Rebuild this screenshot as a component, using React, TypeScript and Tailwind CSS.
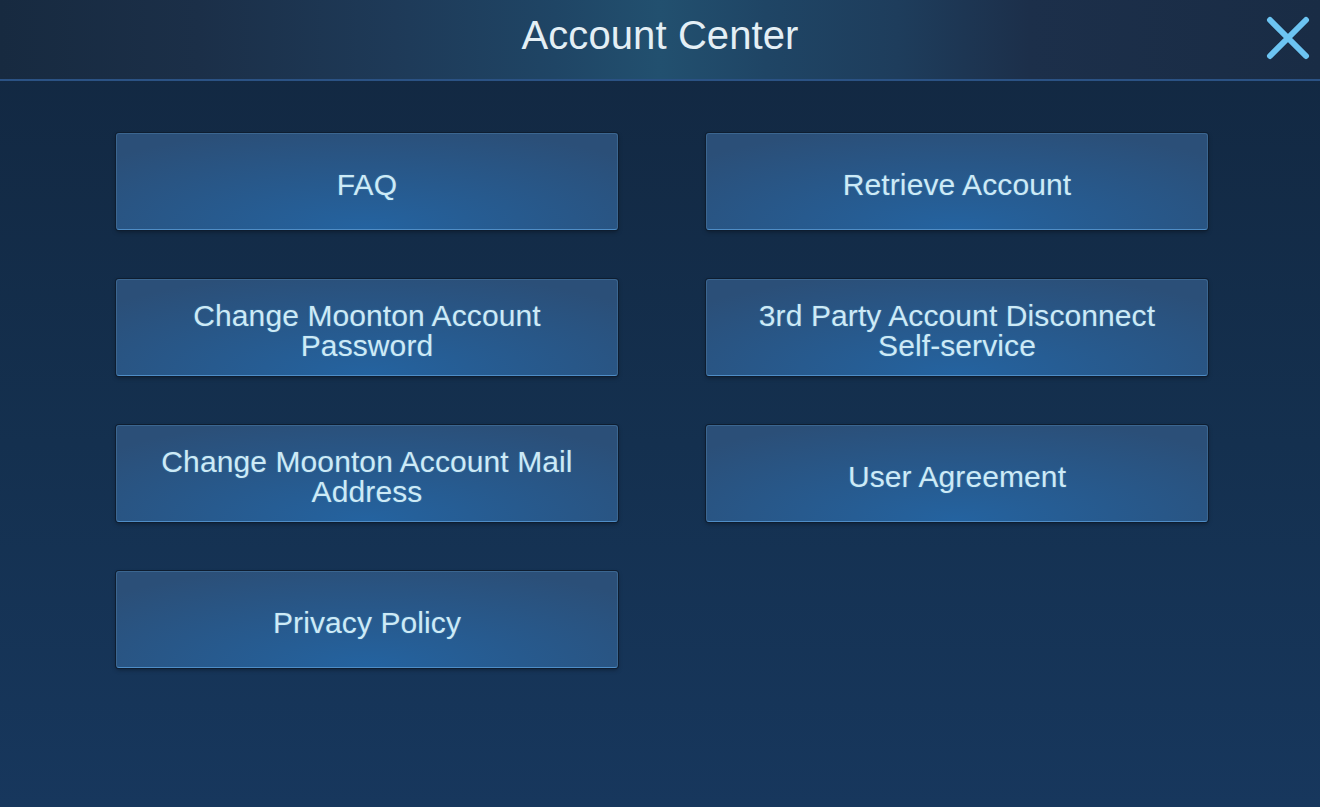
import React from "react";

const items: [string, string | null][] = [
  ["FAQ", "Retrieve Account"],
  ["Change Moonton Account Password", "3rd Party Account Disconnect Self-service"],
  ["Change Moonton Account Mail Address", "User Agreement"],
  ["Privacy Policy", null],
];

function Btn({ label }: { label: string }) {
  return (
    <button className="relative h-[97px] w-[502px] rounded-[3px] border border-[#3b6690] border-b-[#4f8dc6] shadow-[0_0_0_1px_#0e1d30,0_2px_4px_rgba(0,0,0,0.35)] bg-[radial-gradient(ellipse_70%_110%_at_50%_100%,#2463a0_0%,#275a8e_45%,#2b4f78_100%)] flex items-center justify-center px-8 pt-[6px]">
      <span className="text-[30px] leading-[30px] tracking-[0.1px] text-[#cdeaf6] text-center [text-shadow:0_0_2px_rgba(120,200,240,0.35)] font-['Liberation_Sans',Arial,sans-serif]">
        {label}
      </span>
    </button>
  );
}

export default function App() {
  return (
    <div className="w-[1320px] h-[807px] overflow-hidden flex flex-col bg-[linear-gradient(180deg,#122740_0%,#14304f_55%,#17375d_100%)] font-['Liberation_Sans',Arial,sans-serif]">
      <header className="relative h-[81px] shrink-0 flex items-center justify-center border-b-2 border-[#2b5284] bg-[linear-gradient(90deg,#172a40_0%,#1b2f48_15%,#1e3a58_30%,#1f4565_42%,#22506f_50%,#1f4565_58%,#1e3d5c_68%,#1c2f4a_78%,#192c45_100%)]">
        <h1 className="text-[40px] leading-none text-[#e4eff5] tracking-[0.1px] mt-[-10px]">Account Center</h1>
        <button className="absolute right-[8px] top-[14px] w-[48px] h-[48px] flex items-center justify-center">
          <svg width="46" height="46" viewBox="0 0 46 46">
            <path d="M5 5 L41 41 M41 5 L5 41" stroke="#6cc4f2" strokeWidth="6" strokeLinecap="round" />
          </svg>
        </button>
      </header>
      <main className="flex-1 pt-[52px] pl-[116px]">
        <div className="flex flex-col gap-[49px]">
          {items.map(([a, b], i) => (
            <div key={i} className="flex gap-[88px]">
              <Btn label={a} />
              {b && <Btn label={b} />}
            </div>
          ))}
        </div>
      </main>
    </div>
  );
}
